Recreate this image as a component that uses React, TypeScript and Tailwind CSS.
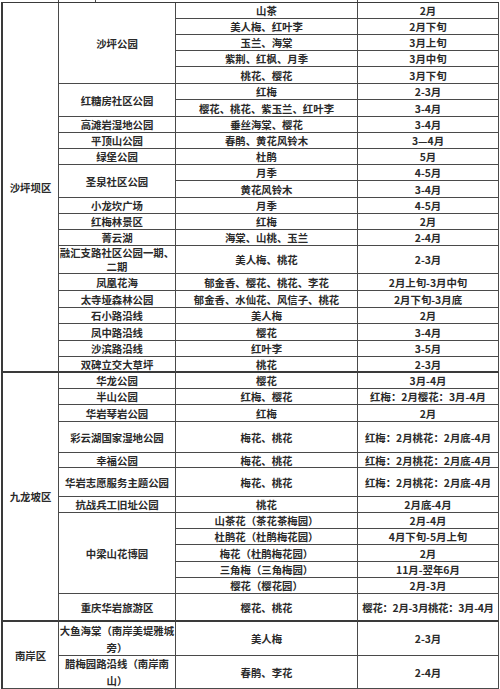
import React from "react";

type CellProps = { children?: React.ReactNode; cls?: string };

const C = ({ children, cls = "" }: CellProps) => (
  <div
    className={
      "flex items-center justify-center text-center whitespace-nowrap border-r border-b border-[#4a4a4a] " +
      cls
    }
  >
    {children}
  </div>
);

export default function App() {
  return (
    <div
      className="w-[500px] h-[689px] bg-white overflow-hidden text-[10.4px] leading-[13px] font-bold text-[#2a2a2a]"
      style={{ fontFamily: '"Noto Sans CJK SC", "Noto Sans", sans-serif' }}
    >
      <div className="flex h-[2px]">
        <div className="w-[59px] border-r border-[#4a4a4a]" />
        <div className="w-[37px] border-r border-[#4a4a4a]" />
        <div className="w-[262px] border-r border-[#4a4a4a]" />
      </div>
      <div className="ml-[1px] w-[498px] border-l-2 border-t border-[#3a3a3a] grid grid-cols-[56px_117px_182px_141px] grid-rows-[16px_16px_16px_16px_17px_16px_17px_16px_16px_16px_16px_17px_16px_16px_16px_28px_17px_17px_16px_17px_16px_16px_16px_16px_17px_31px_15px_29px_16px_16px_16px_17px_16px_16px_28px_34px_33px]">
        {/* 沙坪坝区 */}
        <C cls="row-span-22 border-b-2 border-b-[#3a3a3a]">沙坪坝区</C>
        <C cls="row-span-5">沙坪公园</C>
        <C>山茶</C>
        <C>2月</C>
        <C>美人梅、红叶李</C>
        <C>2月下旬</C>
        <C>玉兰、海棠</C>
        <C>3月上旬</C>
        <C>紫荆、红枫、月季</C>
        <C>3月中旬</C>
        <C>桃花、樱花</C>
        <C>3月下旬</C>

        <C cls="row-span-2">红糖房社区公园</C>
        <C>红梅</C>
        <C>2-3月</C>
        <C>樱花、桃花、紫玉兰、红叶李</C>
        <C>3-4月</C>

        <C>高滩岩湿地公园</C>
        <C>垂丝海棠、樱花</C>
        <C>3-4月</C>

        <C>平顶山公园</C>
        <C>春鹃、黄花风铃木</C>
        <C>3—4月</C>

        <C>绿堡公园</C>
        <C>杜鹃</C>
        <C>5月</C>

        <C cls="row-span-2">圣泉社区公园</C>
        <C>月季</C>
        <C>4-5月</C>
        <C>黄花风铃木</C>
        <C>3-4月</C>

        <C>小龙坎广场</C>
        <C>月季</C>
        <C>4-5月</C>

        <C>红梅林景区</C>
        <C>红梅</C>
        <C>2月</C>

        <C>菁云湖</C>
        <C>海棠、山桃、玉兰</C>
        <C>2-4月</C>

        <C cls="leading-[14px]">
          融汇支路社区公园一期、
          <br />
          二期
        </C>
        <C>美人梅、桃花</C>
        <C>2-3月</C>

        <C>凤凰花海</C>
        <C>郁金香、樱花、桃花、李花</C>
        <C>2月上旬-3月中旬</C>

        <C>太寺垭森林公园</C>
        <C>郁金香、水仙花、风信子、桃花</C>
        <C>2月下旬-3月底</C>

        <C>石小路沿线</C>
        <C>美人梅</C>
        <C>2月</C>

        <C>凤中路沿线</C>
        <C>樱花</C>
        <C>3-4月</C>

        <C>沙滨路沿线</C>
        <C>红叶李</C>
        <C>3-5月</C>

        <C cls="border-b-2 border-b-[#3a3a3a]">双碑立交大草坪</C>
        <C cls="border-b-2 border-b-[#3a3a3a]">桃花</C>
        <C cls="border-b-2 border-b-[#3a3a3a]">2-3月</C>

        {/* 九龙坡区 */}
        <C cls="row-span-13 border-b-2 border-b-[#3a3a3a]">九龙坡区</C>
        <C>华龙公园</C>
        <C>樱花</C>
        <C>3月-4月</C>

        <C>半山公园</C>
        <C>红梅、樱花</C>
        <C>红梅：2月樱花：3月-4月</C>

        <C>华岩琴岩公园</C>
        <C>红梅</C>
        <C>2月</C>

        <C>彩云湖国家湿地公园</C>
        <C>梅花、桃花</C>
        <C>红梅：2月桃花：2月底-4月</C>

        <C>幸福公园</C>
        <C>梅花、桃花</C>
        <C>红梅：2月桃花：2月底-4月</C>

        <C>华岩志愿服务主题公园</C>
        <C>梅花、桃花</C>
        <C>红梅：2月桃花：2月底-4月</C>

        <C>抗战兵工旧址公园</C>
        <C>桃花</C>
        <C>2月底-4月</C>

        <C cls="row-span-5">中梁山花博园</C>
        <C>山茶花（茶花茶梅园）</C>
        <C>2月-4月</C>
        <C>杜鹃花（杜鹃梅花园）</C>
        <C>4月下旬-5月上旬</C>
        <C>梅花（杜鹃梅花园）</C>
        <C>2月</C>
        <C>三角梅（三角梅园）</C>
        <C>11月-翌年6月</C>
        <C>樱花（樱花园）</C>
        <C>2月-3月</C>

        <C cls="border-b-2 border-b-[#3a3a3a]">重庆华岩旅游区</C>
        <C cls="border-b-2 border-b-[#3a3a3a]">樱花、桃花</C>
        <C cls="border-b-2 border-b-[#3a3a3a] tracking-[-0.3px]">
          樱花：2月-3月桃花：3月-4月
        </C>

        {/* 南岸区 */}
        <C cls="row-span-2">南岸区</C>
        <C cls="leading-[17px]">
          大鱼海棠（南岸美堤雅城
          <br />
          旁）
        </C>
        <C>美人梅</C>
        <C>2-3月</C>

        <C cls="leading-[17px]">
          腊梅园路沿线（南岸南
          <br />
          山）
        </C>
        <C>春鹃、李花</C>
        <C>2-4月</C>
      </div>
    </div>
  );
}
